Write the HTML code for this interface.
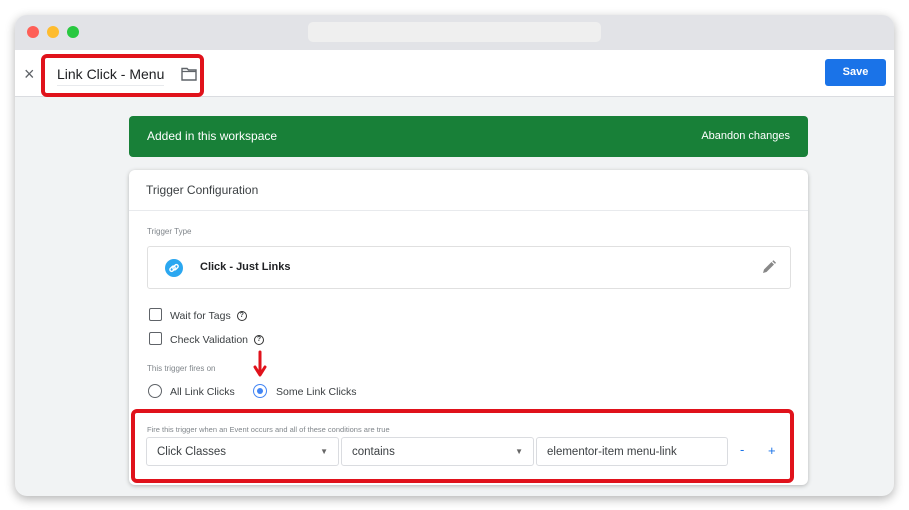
<!DOCTYPE html>
<html><head><style>
*{box-sizing:border-box;margin:0;padding:0}
body{width:909px;height:510px;background:#fff;font-family:"Liberation Sans",sans-serif;position:relative;overflow:hidden;color:#202124}
.win{position:absolute;left:15px;top:15px;width:879px;height:481px;border-radius:12px;background:#f1f3f4;box-shadow:0 3px 10px rgba(0,0,0,.3);overflow:hidden}
.tb{position:absolute;left:0;top:0;width:100%;height:35px;background:#e2e3e7}
.dot{position:absolute;top:11px;width:12px;height:12px;border-radius:50%}
.addr{position:absolute;left:293px;top:7px;width:293px;height:20px;background:#efefef;border-radius:5px}
.hdr{position:absolute;left:0;top:35px;width:100%;height:47px;background:#fff;border-bottom:1px solid #dadce0}
.abs{position:absolute}
.red{position:absolute;border:4px solid #e0121b;border-radius:6px}
.card{position:absolute;left:114px;top:155px;width:679px;height:315px;background:#fff;border-radius:6px;box-shadow:0 1px 4px rgba(0,0,0,.25)}
.sel{position:absolute;top:421px;height:29px;border:1px solid #dadce0;border-radius:3px;background:#fff;font-size:11.5px;color:#3c4043;padding:8px 0 0 10px}
.cb{position:absolute;width:13px;height:13px;border:1.5px solid #5f6368;border-radius:2px}
.q{display:inline-block;width:10px;height:10px;border:1.2px solid #333;border-radius:50%;font-size:7px;text-align:center;line-height:8px;font-weight:bold;vertical-align:middle;margin-left:6px}
.lbl{font-size:10.5px;color:#3c4043}
.sm{font-size:8px;color:#80868b}
</style></head><body>
<div class="win">
 <div class="tb">
  <div class="dot" style="left:12px;background:#fe5f57"></div>
  <div class="dot" style="left:32px;background:#febc2e"></div>
  <div class="dot" style="left:52px;background:#28c840"></div>
  <div class="addr"></div>
 </div>
 <div class="hdr">
  <div class="abs" style="left:9px;top:14px;font-size:18px;color:#5f6368">×</div>
  <div class="abs" style="left:42px;top:16px;font-size:14px;color:#202124;border-bottom:1px solid #e8eaed;padding-bottom:3px">Link Click - Menu</div>
  <svg class="abs" style="left:166px;top:17px" width="16" height="14" viewBox="0 0 16 14"><path d="M1 1.5h5l1.5 1.5H15v10H1z" fill="none" stroke="#5f6368" stroke-width="1.4"/><path d="M1 4.5h14" stroke="#5f6368" stroke-width="1.2"/></svg>
  <div class="abs" style="left:810px;top:9px;width:61px;height:27px;background:#1a73e8;border-radius:3px;color:#fff;font-size:11px;font-weight:bold;text-align:center;line-height:27px">Save</div>
 </div>
 <div class="abs" style="left:114px;top:101px;width:679px;height:41px;background:#188038;border-radius:4px;color:#fff;font-size:12px">
  <span class="abs" style="left:18px;top:13px">Added in this workspace</span>
  <span class="abs" style="right:18px;top:14px;font-size:11px">Abandon changes</span>
 </div>
 <div class="card">
  <div class="abs" style="left:17px;top:13px;font-size:12px;color:#3c4043">Trigger Configuration</div>
  <div class="abs" style="left:0;top:40px;width:100%;border-top:1px solid #e8eaed"></div>
  <div class="abs sm" style="left:18px;top:57px">Trigger Type</div>
  <div class="abs" style="left:18px;top:76px;width:644px;height:43px;border:1px solid #e0e0e0;border-radius:3px">
   <div class="abs" style="left:17px;top:12px;width:18px;height:18px;border-radius:50%;background:#2ba7f0"><svg width="18" height="18" viewBox="0 0 18 18"><g fill="none" stroke="#fff" stroke-width="1.4"><rect x="4.5" y="8" width="6" height="3.5" rx="1.7" transform="rotate(-45 7.5 9.7)"/><rect x="7.5" y="6.5" width="6" height="3.5" rx="1.7" transform="rotate(-45 10.5 8.2)"/></g></svg></div>
   <div class="abs" style="left:52px;top:14px;font-size:11px;font-weight:bold;color:#202124">Click - Just Links</div>
   <svg class="abs" style="left:614px;top:13px" width="14" height="14" viewBox="0 0 14 14"><path d="M1 13l1-3.5 7.5-7.5 2.5 2.5L4.5 12z" fill="#888"/><path d="M10.3 1.2l1.2-1 2.5 2.5-1 1.2z" fill="#888"/></svg>
  </div>
  <div class="cb" style="left:20px;top:138px"></div>
  <div class="abs lbl" style="left:41px;top:140px">Wait for Tags<span class="q">?</span></div>
  <div class="cb" style="left:20px;top:162px"></div>
  <div class="abs lbl" style="left:41px;top:164px">Check Validation<span class="q">?</span></div>
  <div class="abs sm" style="left:18px;top:194px">This trigger fires on</div>
  <div class="abs" style="left:19px;top:214px;width:14px;height:14px;border:1.5px solid #5f6368;border-radius:50%"></div>
  <div class="abs lbl" style="left:41px;top:216px">All Link Clicks</div>
  <div class="abs" style="left:124px;top:214px;width:14px;height:14px;border:1.5px solid #4285f4;border-radius:50%"><div style="margin:2.5px;width:6px;height:6px;border-radius:50%;background:#4285f4"></div></div>
  <div class="abs lbl" style="left:147px;top:216px">Some Link Clicks</div>
  <svg class="abs" style="left:124px;top:180px" width="14" height="28" viewBox="0 0 14 28"><path d="M7 2v22" stroke="#e0121b" stroke-width="3" stroke-linecap="round"/><path d="M2 17l5 8 5-8" fill="none" stroke="#e0121b" stroke-width="3" stroke-linecap="round" stroke-linejoin="round"/></svg>
  <div class="abs" style="left:18px;top:255px;font-size:7.5px;color:#80868b">Fire this trigger when an Event occurs and all of these conditions are true</div>
 </div>
 <div class="sel" style="left:131px;width:193px;top:422px">Click Classes<span class="abs" style="right:10px;top:9px;font-size:8px;color:#666">▼</span></div>
 <div class="sel" style="left:326px;width:193px;top:422px">contains<span class="abs" style="right:10px;top:9px;font-size:8px;color:#666">▼</span></div>
 <div class="sel" style="left:521px;width:192px;top:422px">elementor-item menu-link</div>
 <div class="abs" style="left:725px;top:427px;color:#1a73e8;font-size:13px">-</div>
 <div class="abs" style="left:753px;top:428px;color:#1a73e8;font-size:13px">+</div>
</div>
<div class="red" style="left:41px;top:54px;width:163px;height:43px"></div>
<div class="red" style="left:131px;top:409px;width:663px;height:74px"></div>
</body></html>
